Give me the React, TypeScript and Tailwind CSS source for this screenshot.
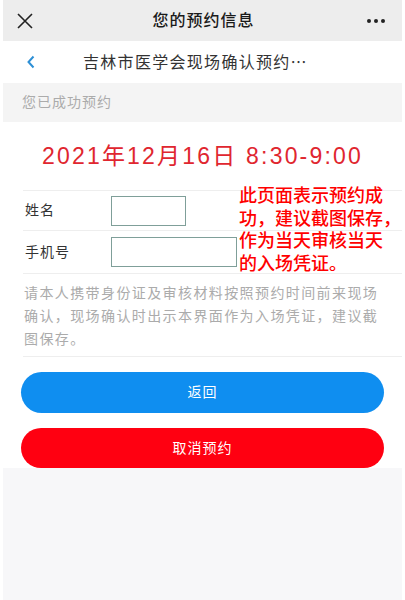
import React from "react";

const Row: React.FC<{ label: string; boxWidth: string; height: string }> = ({ label, boxWidth, height }) => (
  <div className={`ml-[20px] border-t border-[#eeeeee] flex items-center ${height}`}>
    <div className="w-[88px] pl-[2px] text-[14px] tracking-[1px] text-[#333333]">{label}</div>
    <div className={`h-[30px] border border-[#7f9f99] bg-white ${boxWidth}`} />
  </div>
);

export default function App() {
  return (
    <div
      className="relative w-[405px] h-[600px] bg-white overflow-hidden"
      style={{ fontFamily: '"Liberation Sans", "Noto Sans CJK SC", sans-serif' }}
    >
      <div className="mx-[3px] h-full flex flex-col">
        {/* top bar */}
        <div className="h-[41px] bg-[#ededed] flex items-center justify-between px-[12px]">
          <svg width="18" height="18" viewBox="0 0 18 18" className="ml-[1px]">
            <path d="M2 2 L16 16 M16 2 L2 16" stroke="#222" strokeWidth="1.6" fill="none" />
          </svg>
          <div className="text-[16px] tracking-[1px] text-[#1a1a1a] font-medium ml-[6px]">您的预约信息</div>
          <div className="flex gap-[3px] mr-[5px]">
            <span className="w-[4px] h-[4px] rounded-full bg-[#222]" />
            <span className="w-[4px] h-[4px] rounded-full bg-[#222]" />
            <span className="w-[4px] h-[4px] rounded-full bg-[#222]" />
          </div>
        </div>

        {/* nav */}
        <div className="h-[42px] bg-white flex items-center">
          <svg width="10" height="14" viewBox="0 0 10 14" className="ml-[23px]">
            <path d="M7.5 1.5 L2.5 7 L7.5 12.5" stroke="#2d8fd5" strokeWidth="2" fill="none" />
          </svg>
          <div className="ml-[47px] text-[16px] tracking-[1.3px] text-[#333333]">
            吉林市医学会现场确认预约<span className="font-['Noto_Sans_CJK_SC']">…</span>
          </div>
        </div>

        {/* status */}
        <div className="h-[39px] bg-[#f4f4f4] flex items-center pl-[19px] text-[14px] tracking-[1px] text-[#ababab]">
          您已成功预约
        </div>

        {/* date */}
        <div className="h-[68px] bg-white flex items-center justify-center">
          <span className="text-[23px] tracking-[2.2px] text-[#e0262f]">2021年12月16日 8:30-9:00</span>
        </div>

        <Row label="姓名" boxWidth="w-[75px]" height="h-[40px]" />
        <Row label="手机号" boxWidth="w-[126px]" height="h-[43px]" />

        {/* notice */}
        <div className="ml-[20px] border-t border-[#eeeeee] h-[83px] pt-[8px] pr-[12px] pl-[1px] text-[14px] leading-[23px] tracking-[1.4px] text-[#ababab]">
          请本人携带身份证及审核材料按照预约时间前来现场确认，现场确认时出示本界面作为入场凭证，建议截图保存。
        </div>

        {/* buttons */}
        <div className="ml-[20px] border-t border-[#eeeeee]" />
        <div className="bg-white px-[18px] pt-[15px] flex flex-col gap-[15px]">
          <button className="h-[41px] rounded-full bg-[#0f8ef0] text-white text-[14px] tracking-[1px]">返回</button>
          <button className="h-[40px] rounded-full bg-[#ff0011] text-white text-[14px] tracking-[1px]">取消预约</button>
        </div>

        <div className="flex-1 bg-[#f7f7f9]" />
      </div>

      {/* red annotation overlay */}
      <div className="absolute left-[239px] top-[185px] text-[18px] leading-[22.5px] text-[#ff0000] font-medium whitespace-nowrap">
        此页面表示预约成
        <br />
        功，建议截图保存，
        <br />
        作为当天审核当天
        <br />
        的入场凭证。
      </div>
    </div>
  );
}
